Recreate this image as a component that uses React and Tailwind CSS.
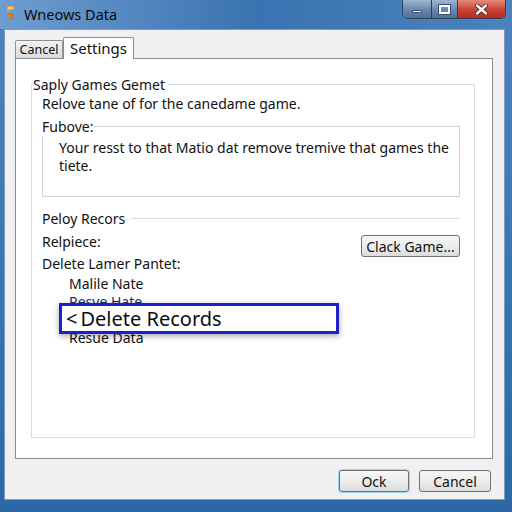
import React from "react";

const font = { fontFamily: '"Noto Sans", "Open Sans", sans-serif' };

function AppIcon() {
  return (
    <svg width="11" height="16" viewBox="0 0 11 16">
      <path d="M2 1 L9 1 L9 5 L5 5 L5 7 L2 7 Z" fill="#f0a020" />
      <path d="M2 8 L9 8 L9 15 L2 15 L2 12 L6 12 L6 10 L2 10 Z" fill="#e2731a" />
      <rect x="3" y="2" width="5" height="2" fill="#fcd36a" />
    </svg>
  );
}

function WinControls() {
  return (
    <div className="flex h-[19px] border border-t-0 border-[#2c3e57] rounded-b-[5px] overflow-hidden shadow-[0_0_1px_rgba(255,255,255,0.6)]">
      <div className="w-[29px] h-full bg-gradient-to-b from-[#9fb6d2] via-[#6c8bb1] to-[#4f7099] border-r border-[#2c3e57] flex items-center justify-center">
        <div className="w-[10px] h-[3px] bg-white border border-[#3a4f6b] mt-[5px]" />
      </div>
      <div className="w-[26px] h-full bg-gradient-to-b from-[#9fb6d2] via-[#6c8bb1] to-[#4f7099] border-r border-[#2c3e57] flex items-center justify-center">
        <div className="w-[11px] h-[9px] border-2 border-white outline outline-1 outline-[#3a4f6b]" />
      </div>
      <div className="w-[47px] h-full bg-gradient-to-b from-[#e58a7c] via-[#cb4538] to-[#b9281c] flex items-center justify-center">
        <svg width="13" height="11" viewBox="0 0 13 11">
          <path d="M2 1.5 L11 9.5 M11 1.5 L2 9.5" stroke="#4a1510" strokeWidth="4" strokeLinecap="round" />
          <path d="M2 1.5 L11 9.5 M11 1.5 L2 9.5" stroke="#ffffff" strokeWidth="2.4" strokeLinecap="round" />
        </svg>
      </div>
    </div>
  );
}

function Btn({ children, className = "" }) {
  return (
    <div
      className={
        "h-[22px] flex items-center justify-center rounded-[3px] border border-[#707070] bg-gradient-to-b from-[#f6f6f6] via-[#ececec] to-[#dcdcdc] text-[14px] text-[#111] " +
        className
      }
    >
      {children}
    </div>
  );
}

export default function App() {
  return (
    <div
      className="w-[512px] h-[512px] flex flex-col bg-gradient-to-b from-[#4e84bf] via-[#3b76b4] to-[#2d68a6] overflow-hidden"
      style={font}
    >
      {/* Title bar */}
      <div className="h-[29px] flex items-start bg-gradient-to-r from-[#6d9dd1] via-[#3a73b1] to-[#4a82bd]">
        <div className="mt-[5px] ml-[5px]">
          <AppIcon />
        </div>
        <div className="ml-[8px] mt-[4px] text-[14.5px] leading-[20px] text-[#0a0a0a]">Wneows Data</div>
        <div className="ml-auto mr-[6px]">
          <WinControls />
        </div>
      </div>

      {/* Client area */}
      <div className="flex-1 ml-[4px] mr-[7px] mb-[12px] bg-[#f0f0f0] border border-[#7f9cbd] flex flex-col pt-[7px] pl-[10px] pr-[11px]">
        {/* Tabs */}
        <div className="flex items-end h-[21px]">
          <div className="w-[48px] h-[19px] mb-[-1px] border border-[#8e8f8f] border-b-0 rounded-t-[2px] bg-gradient-to-b from-[#f2f2f2] to-[#dadada] flex items-center justify-center text-[12.5px] text-[#111]">
            Cancel
          </div>
          <div className="relative z-10 w-[71px] h-[22px] mb-[-1px] border border-[#8e8f8f] border-b-0 rounded-t-[2px] bg-white flex items-start justify-center pt-[0px] text-[15px] leading-[20px] text-[#111]">
            Settings
          </div>
        </div>

        {/* Panel */}
        <div className="h-[401px] border border-[#898c95] bg-white pt-[16px] pl-[15px] pr-[17px]">
          <fieldset className="h-[363px] border border-[#d5dfe5] pl-[10px] text-[#111]">
            <legend className="ml-[-9px] pr-[3px] text-[14px] leading-[19px]">Saply Games Gemet</legend>
            <div className="text-[14px] leading-[19px]">Relove tane of for the canedame game.</div>

            <fieldset className="mt-[4px] mr-[14px] h-[80px] border border-[#d0d4d8] pl-[16px] pr-[10px]">
              <legend className="text-[14px] leading-[19px] pr-[1px] ml-[-17px]">Fubove:</legend>
              <div className="pt-[3px] text-[14px] leading-[18px]">
                Your resst to that Matio dat remove tremive that games the
                <br />
                tiete.
              </div>
            </fieldset>

            <div className="mt-[12px] mr-[14px] flex items-center">
              <span className="text-[14px] leading-[19px]">Peloy Recors</span>
              <div className="flex-1 h-px bg-[#d5dfe5] ml-[6px]" />
            </div>

            <div className="mt-[3px] mr-[14px] flex items-start">
              <div className="flex-1 text-[14px] leading-[22px]">
                <div>Relpiece:</div>
                <div>Delete Lamer Pantet:</div>
              </div>
              <Btn className="mt-[4px] w-[99px]">Clack Game...</Btn>
            </div>

            <div className="relative text-[14px] leading-[18px]">
              <div className="pl-[27px]">
                <div>Malile Nate</div>
                <div className="text-[#1e2c6a]">Resve Hate</div>
                <div>Delete Records</div>
                <div>Resue Data</div>
              </div>
              <div className="absolute left-[17px] top-[28px] w-[280px] h-[31px] border-[3px] border-[#1f1fc8] bg-white shadow-[0_2px_6px_rgba(0,0,0,0.35)] flex items-center pl-[4px]">
                <span className="text-[20px] leading-[24px] text-[#0d0d0d] mt-[1px]">
                  &lt;<span className="ml-[3px]">Delete Records</span>
                </span>
              </div>
            </div>
          </fieldset>
        </div>

        {/* Bottom buttons */}
        <div className="mt-[11px] pr-[2px] flex justify-end gap-[10px]">
          <Btn className="w-[70px] border-[#3c9bd1] shadow-[0_0_0_1px_#9fd6f0]">Ock</Btn>
          <Btn className="w-[72px]">Cancel</Btn>
        </div>
      </div>
    </div>
  );
}
